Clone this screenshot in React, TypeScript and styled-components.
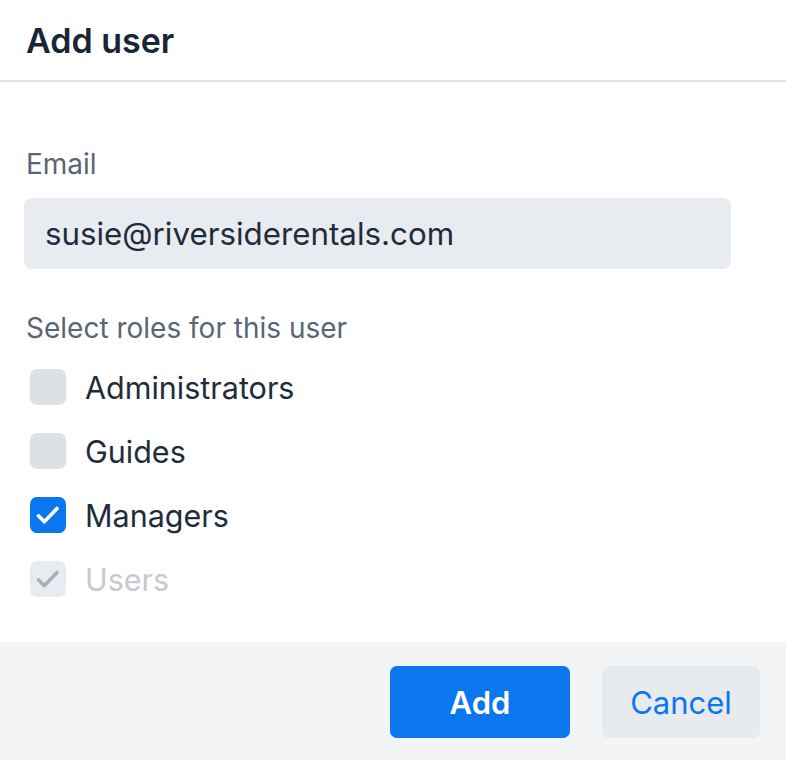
import React from "react";
import styled, { createGlobalStyle } from "styled-components";

const Global = createGlobalStyle`
  html, body { margin: 0; padding: 0; background: #ffffff; }
  body { font-family: Inter, "Noto Sans", sans-serif; -webkit-font-smoothing: antialiased; }
  * { box-sizing: border-box; }
`;

const Dialog = styled.div`
  width: 786px;
  height: 760px;
  display: flex;
  flex-direction: column;
  background: #ffffff;
`;

const Header = styled.div`
  height: 82px;
  padding: 0 26px;
  display: flex;
  align-items: center;
  border-bottom: 2px solid #dfe3e8;
`;

const Title = styled.h1`
  margin: 0;
  font-size: 34px;
  font-weight: 600;
  color: #1a2636;
`;

const Body = styled.div`
  flex: 1;
  padding: 65px 55px 0 24px;
  display: flex;
  flex-direction: column;
`;

const Label = styled.div`
  padding-left: 2px;
  font-size: 28px;
  color: #5a6575;
  line-height: 34px;
`;

const Input = styled.input`
  margin-top: 17px;
  height: 71px;
  width: 100%;
  border: none;
  border-radius: 8px;
  background: #e8ebef;
  padding: 0 21px;
  font-family: inherit;
  font-size: 31.3px;
  color: #1f2c3c;
  outline: none;
`;

const RolesLabel = styled(Label)`
  margin-top: 42px;
`;

const RoleList = styled.div`
  margin-top: 10px;
  display: flex;
  flex-direction: column;
`;

const Row = styled.label<{ $disabled?: boolean }>`
  height: 64px;
  display: flex;
  align-items: center;
  gap: 20px;
  padding-left: 6px;
  font-size: 30.5px;
  color: ${(p) => (p.$disabled ? "#c5cad1" : "#1f2c3c")};
`;

const Box = styled.span<{ $checked?: boolean; $disabled?: boolean }>`
  width: 36px;
  height: 36px;
  flex: none;
  border-radius: 7px;
  display: flex;
  align-items: center;
  justify-content: center;
  background: ${(p) =>
    p.$disabled ? "#e8ebef" : p.$checked ? "#0b77ee" : "#dde1e6"};
`;

const RoleName = styled.span`
  margin-left: -1px;
`;

const Footer = styled.div`
  height: 118px;
  background: #f3f4f6;
  display: flex;
  justify-content: flex-end;
  align-items: flex-start;
  padding: 24px 26px 0 0;
  gap: 32px;
`;

const Button = styled.button<{ $primary?: boolean }>`
  height: 72px;
  width: ${(p) => (p.$primary ? "180px" : "158px")};
  border: none;
  border-radius: 7px;
  font-family: inherit;
  font-size: 31px;
  font-weight: ${(p) => (p.$primary ? 600 : 400)};
  background: ${(p) => (p.$primary ? "#0b77ee" : "#e7eaee")};
  color: ${(p) => (p.$primary ? "#ffffff" : "#0b77ee")};
`;

const Check = ({ color }: { color: string }) => (
  <svg width="36" height="36" viewBox="0 0 36 36" fill="none">
    <path
      d="M8.5 18.8 L14.3 24.8 L27 11.5"
      stroke={color}
      strokeWidth="3.6"
      strokeLinecap="round"
      strokeLinejoin="round"
    />
  </svg>
);

const roles = [
  { name: "Administrators", checked: false, disabled: false },
  { name: "Guides", checked: false, disabled: false },
  { name: "Managers", checked: true, disabled: false },
  { name: "Users", checked: true, disabled: true },
];

export default function App() {
  return (
    <>
      <Global />
      <Dialog>
        <Header>
          <Title>Add user</Title>
        </Header>
        <Body>
          <Label>Email</Label>
          <Input defaultValue="susie@riversiderentals.com" />
          <RolesLabel>Select roles for this user</RolesLabel>
          <RoleList>
            {roles.map((r) => (
              <Row key={r.name} $disabled={r.disabled}>
                <Box $checked={r.checked} $disabled={r.disabled}>
                  {r.checked && (
                    <Check color={r.disabled ? "#aab0b8" : "#ffffff"} />
                  )}
                </Box>
                <RoleName>{r.name}</RoleName>
              </Row>
            ))}
          </RoleList>
        </Body>
        <Footer>
          <Button $primary>Add</Button>
          <Button>Cancel</Button>
        </Footer>
      </Dialog>
    </>
  );
}
